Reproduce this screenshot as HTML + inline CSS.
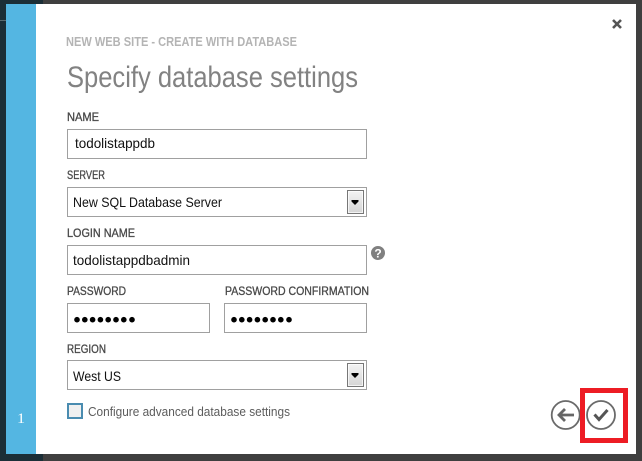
<!DOCTYPE html>
<html><head><meta charset="utf-8"><style>
html,body{margin:0;padding:0;width:642px;height:461px;overflow:hidden;background:#3f3f3f}
svg{display:block}
text{font-family:"Liberation Sans",sans-serif}
.l{font-size:12px;fill:#484848;stroke:#484848;stroke-width:.3}
.v{font-size:14px;fill:#111}
</style></head><body>
<svg width="642" height="461" viewBox="0 0 642 461" xmlns="http://www.w3.org/2000/svg">
<defs><linearGradient id="g" x1="0" y1="0" x2="0" y2="1"><stop offset="0" stop-color="#f4f4f4"/><stop offset="1" stop-color="#d4d4d4"/></linearGradient></defs>
<rect width="642" height="461" fill="#3f3f3f"/>
<rect width="43" height="461" fill="#1b2e37"/>
<rect x="0" y="20" width="6" height="1" fill="#5a6a70"/>
<rect x="6" y="4" width="30" height="450" fill="#54b6e2"/>
<rect x="36" y="4" width="600" height="450" fill="#fff"/>

<text x="66" y="46" font-size="13" font-weight="bold" fill="#b4b4b4" textLength="231" lengthAdjust="spacingAndGlyphs">NEW WEB SITE - CREATE WITH DATABASE</text>
<text x="67" y="87" font-size="30" fill="#828282" textLength="291" lengthAdjust="spacingAndGlyphs">Specify database settings</text>

<path d="M613 20l8 8M621 20l-8 8" stroke="#555" stroke-width="2.600" fill="none"/>

<text class="l" x="67" y="121" textLength="32" lengthAdjust="spacingAndGlyphs">NAME</text>
<rect x="67.500" y="129.500" width="299" height="29" fill="#fff" stroke="#a0a0a0"/>
<text class="v" x="75" y="148" textLength="80" lengthAdjust="spacingAndGlyphs">todolistappdb</text>

<text class="l" x="67" y="179" textLength="38" lengthAdjust="spacingAndGlyphs">SERVER</text>
<rect x="67.500" y="187.500" width="299" height="29" fill="#fff" stroke="#a0a0a0"/>
<text class="v" x="73" y="207" textLength="149" lengthAdjust="spacingAndGlyphs">New SQL Database Server</text>
<rect x="347.500" y="190.500" width="16" height="23" fill="url(#g)" stroke="#777"/>
<rect x="348.500" y="191.500" width="14" height="21" fill="none" stroke="#fff" stroke-opacity=".7"/>
<path d="M351.500 200h7v1.500l-3.500 3.500-3.500-3.500z" fill="#000"/>

<text class="l" x="67" y="237" textLength="68" lengthAdjust="spacingAndGlyphs">LOGIN NAME</text>
<rect x="67.500" y="245.500" width="299" height="29" fill="#fff" stroke="#a0a0a0"/>
<text class="v" x="73" y="265" textLength="117" lengthAdjust="spacingAndGlyphs">todolistappdbadmin</text>
<circle cx="378" cy="253" r="7" fill="#808080"/>
<text x="378" y="257.500" font-size="12" font-weight="bold" fill="#fff" text-anchor="middle">?</text>

<text class="l" x="67" y="295" textLength="59" lengthAdjust="spacingAndGlyphs">PASSWORD</text>
<rect x="67.500" y="303.500" width="142" height="29" fill="#fff" stroke="#a0a0a0"/>
<g fill="#000"><circle cx="77" cy="319.700" r="2.800"/><circle cx="84.800" cy="319.700" r="2.800"/><circle cx="92.600" cy="319.700" r="2.800"/><circle cx="100.400" cy="319.700" r="2.800"/><circle cx="108.200" cy="319.700" r="2.800"/><circle cx="116" cy="319.700" r="2.800"/><circle cx="123.800" cy="319.700" r="2.800"/><circle cx="132" cy="319.700" r="2.800"/></g>

<text class="l" x="225" y="295" textLength="144" lengthAdjust="spacingAndGlyphs">PASSWORD CONFIRMATION</text>
<rect x="224.500" y="303.500" width="142" height="29" fill="#fff" stroke="#a0a0a0"/>
<g fill="#000"><circle cx="234" cy="319.700" r="2.800"/><circle cx="241.800" cy="319.700" r="2.800"/><circle cx="249.600" cy="319.700" r="2.800"/><circle cx="257.400" cy="319.700" r="2.800"/><circle cx="265.200" cy="319.700" r="2.800"/><circle cx="273" cy="319.700" r="2.800"/><circle cx="280.800" cy="319.700" r="2.800"/><circle cx="289" cy="319.700" r="2.800"/></g>

<text class="l" x="67" y="353" textLength="39" lengthAdjust="spacingAndGlyphs">REGION</text>
<rect x="67.500" y="360.500" width="299" height="29" fill="#fff" stroke="#a0a0a0"/>
<text class="v" x="73" y="381" textLength="48" lengthAdjust="spacingAndGlyphs">West US</text>
<rect x="347.500" y="363.500" width="16" height="23" fill="url(#g)" stroke="#777"/>
<rect x="348.500" y="364.500" width="14" height="21" fill="none" stroke="#fff" stroke-opacity=".7"/>
<path d="M351.500 373h7v1.500l-3.500 3.500-3.500-3.500z" fill="#000"/>

<rect x="68" y="404" width="14" height="14" fill="#f0f0f0" stroke="#4a8cb0" stroke-width="2"/>
<text x="88" y="416" font-size="13" fill="#5c5c5c" textLength="202" lengthAdjust="spacingAndGlyphs">Configure advanced database settings</text>

<text x="17" y="423" font-size="15" fill="#fff" style="font-family:'Liberation Serif',serif" textLength="8" lengthAdjust="spacingAndGlyphs">1</text>

<circle cx="565.700" cy="415" r="14" fill="#fff" stroke="#6a6a6a" stroke-width="1.800"/>
<path d="M574 415h-14M565 409l-6 6 6 6" fill="none" stroke="#666" stroke-width="2.800"/>
<circle cx="601" cy="415" r="14" fill="#fff" stroke="#6a6a6a" stroke-width="1.800"/>
<path d="M594.500 414.500l4.500 5 8.500-9.500" fill="none" stroke="#555" stroke-width="3"/>
<rect x="582.500" y="390.500" width="43" height="50" fill="none" stroke="#ed1c24" stroke-width="5"/>
</svg>
</body></html>
